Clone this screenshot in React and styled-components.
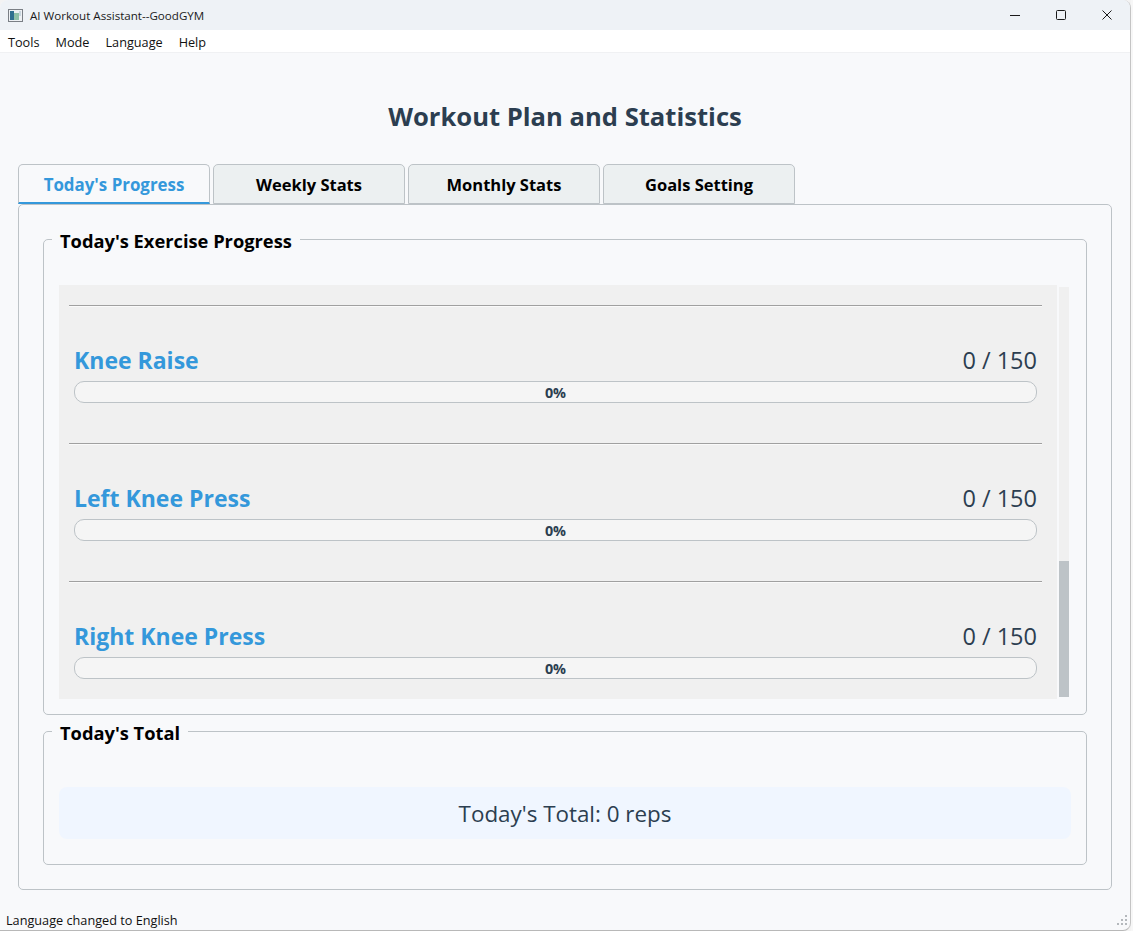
import React from "react";
import styled, { createGlobalStyle } from "styled-components";

const GlobalStyle = createGlobalStyle`
  html, body {
    margin: 0;
    padding: 0;
    width: 1133px;
    height: 931px;
    overflow: hidden;
    background: #f3f3f3;
  }
  * { box-sizing: border-box; }
`;

const Desktop = styled.div`
  width: 1133px;
  height: 931px;
  display: flex;
  font-family: "Open Sans", "Noto Sans", sans-serif;
`;

const Window = styled.div`
  width: 1131px;
  height: 931px;
  display: flex;
  flex-direction: column;
  background: #f8f9fb;
  border-right: 1px solid #c4c4c4;
  border-bottom: 1px solid #b8b8b8;
  border-radius: 8px 8px 8px 0;
  overflow: hidden;
`;

const DesktopStrip = styled.div`
  flex: 1;
  background: #f7f7f7;
`;

const TitleBar = styled.div`
  height: 30px;
  flex: none;
  display: flex;
  align-items: center;
  padding-left: 8px;
  background: #eef2f6;
`;

const TitleText = styled.span`
  margin-left: 7px;
  font-size: 11.6px;
  color: #1a1a1a;
`;

const WindowButtons = styled.div`
  margin-left: auto;
  display: flex;
  color: #1a1a1a;
`;

const WindowButton = styled.div`
  width: 46px;
  height: 30px;
  display: flex;
  align-items: center;
  justify-content: center;
`;

const MenuBar = styled.div`
  height: 23px;
  flex: none;
  display: flex;
  align-items: center;
  gap: 16px;
  padding: 2px 0 0 8px;
  background: #ffffff;
  border-bottom: 1px solid #f0f1f3;
  font-size: 12.7px;
  color: #111;
`;

const Main = styled.div`
  flex: 1;
  display: flex;
  flex-direction: column;
  padding: 0 18px 0 18px;
  min-height: 0;
`;

const Heading = styled.h1`
  margin: 0;
  height: 111px;
  padding: 47px 0 0 0;
  text-align: center;
  font-size: 25.6px;
  line-height: 34px;
  font-weight: 700;
  color: #2c3e50;
`;

const Tabs = styled.div`
  display: flex;
  gap: 3px;
  height: 41px;
  flex: none;
  position: relative;
  z-index: 1;
`;

const Tab = styled.div`
  width: 192px;
  height: 40px;
  display: flex;
  align-items: center;
  justify-content: center;
  padding-top: 1px;
  background: ${(p) => (p.$active ? "#f8f9fb" : "#ecf0f1")};
  border: 1px solid #bdc3c7;
  border-bottom: ${(p) => (p.$active ? "2px solid #3498db" : "1px solid #bdc3c7")};
  border-radius: 5px 5px 0 0;
  font-size: ${(p) => (p.$active ? "16.9px" : "16.5px")};
  font-weight: 700;
  color: ${(p) => (p.$active ? "#3498db" : "#000")};
`;

const Pane = styled.div`
  width: 1094px;
  height: 686px;
  flex: none;
  margin-top: -1px;
  padding: 20px 24px 0 24px;
  border: 1px solid #bdc3c7;
  border-radius: 5px;
`;

const Group = styled.fieldset`
  margin: 0;
  padding: 0 15px;
  min-width: 0;
  height: ${(p) => p.$height}px;
  margin-bottom: 2px;
  border: 1px solid #bdc3c7;
  border-radius: 5px;
`;

const Legend = styled.legend`
  margin-left: -7px;
  padding: 4px 8px 0 8px;
  font-size: 18.3px;
  line-height: 24px;
  font-weight: 700;
  color: #000;
`;

const ScrollRow = styled.div`
  display: flex;
  gap: 2px;
  margin-top: 32px;
  height: 414px;
`;

const ScrollArea = styled.div`
  width: 998px;
  height: 414px;
  padding: 20px 15px 0 10px;
  background: #f0f0f0;
  overflow: hidden;
`;

const Scrollbar = styled.div`
  width: 10px;
  height: 410px;
  margin-top: 2px;
  display: flex;
  flex-direction: column;
  justify-content: flex-end;
  background: #f0f0f0;
`;

const ScrollThumb = styled.div`
  height: 136px;
  background: #bdc3c7;
`;

const ExerciseItem = styled.div`
  height: 138px;
  display: flex;
  flex-direction: column;
  border-top: 1px solid #a0a0a0;
  box-shadow: inset 0 1px 0 #fafafa;
`;

const ExerciseHeader = styled.div`
  display: flex;
  justify-content: space-between;
  align-items: center;
  margin-top: 36px;
  padding: 0 5px;
  height: 36px;
`;

const ExerciseName = styled.span`
  font-size: 23px;
  font-weight: 700;
  color: #3498db;
`;

const ExerciseCount = styled.span`
  font-size: 23.5px;
  color: #2c3e50;
`;

const ProgressTrack = styled.div`
  margin: 3px 5px 0 5px;
  height: 22px;
  display: flex;
  align-items: center;
  justify-content: center;
  background: #f5f5f5;
  border: 1px solid #bdc3c7;
  border-radius: 10px;
  font-size: 14.4px;
  font-weight: 700;
  color: #2c3e50;
`;

const TotalBox = styled.div`
  margin-top: 42px;
  height: 52px;
  padding-top: 1px;
  display: flex;
  align-items: center;
  justify-content: center;
  background: #f0f6ff;
  border-radius: 8px;
  font-size: 22.4px;
  color: #2c3e50;
`;

const StatusBar = styled.div`
  flex: none;
  height: 19px;
  margin-top: auto;
  display: flex;
  align-items: center;
  justify-content: space-between;
  padding: 0 2px 2px 6px;
  font-size: 12.7px;
  color: #111;
`;

const exercises = ["Knee Raise", "Left Knee Press", "Right Knee Press"];
const tabs = ["Today's Progress", "Weekly Stats", "Monthly Stats", "Goals Setting"];

function AppIcon() {
  return (
    <svg width="15" height="13" viewBox="0 0 15 13">
      <rect x="0.5" y="0.5" width="14" height="12" fill="#eef1f4" stroke="#7a7f85" />
      <rect x="2" y="2" width="4" height="9" fill="#2f6f8f" />
      <rect x="6" y="4" width="5" height="7" fill="#8fc0a8" />
      <rect x="11" y="2" width="2" height="5" fill="#c9d6de" />
    </svg>
  );
}

function SizeGrip() {
  const dots = [[9, 1], [5, 5], [9, 5], [1, 9], [5, 9], [9, 9]];
  return (
    <svg width="12" height="12" viewBox="0 0 12 12">
      {dots.map(([x, y]) => (
        <rect key={`${x}-${y}`} x={x} y={y} width="2" height="2" fill="#b4b8bc" />
      ))}
    </svg>
  );
}

export default function App() {
  return (
    <Desktop>
      <GlobalStyle />
      <Window>
        <TitleBar>
          <AppIcon />
          <TitleText>AI Workout Assistant--GoodGYM</TitleText>
          <WindowButtons>
            <WindowButton>
              <svg width="10" height="10" viewBox="0 0 10 10">
                <path d="M0 5.5h10" stroke="currentColor" fill="none" />
              </svg>
            </WindowButton>
            <WindowButton>
              <svg width="10" height="10" viewBox="0 0 10 10">
                <rect x="0.5" y="0.5" width="9" height="9" rx="1" stroke="currentColor" fill="none" />
              </svg>
            </WindowButton>
            <WindowButton>
              <svg width="10" height="10" viewBox="0 0 10 10">
                <path d="M0.5 0.5l9 9M9.5 0.5l-9 9" stroke="currentColor" fill="none" />
              </svg>
            </WindowButton>
          </WindowButtons>
        </TitleBar>
        <MenuBar>
          <span>Tools</span>
          <span>Mode</span>
          <span>Language</span>
          <span>Help</span>
        </MenuBar>
        <Main>
          <Heading>Workout Plan and Statistics</Heading>
          <Tabs>
            {tabs.map((tab, i) => (
              <Tab key={tab} $active={i === 0}>{tab}</Tab>
            ))}
          </Tabs>
          <Pane>
            <Group $height={490}>
              <Legend>Today's Exercise Progress</Legend>
              <ScrollRow>
                <ScrollArea>
                  {exercises.map((name) => (
                    <ExerciseItem key={name}>
                      <ExerciseHeader>
                        <ExerciseName>{name}</ExerciseName>
                        <ExerciseCount>0 / 150</ExerciseCount>
                      </ExerciseHeader>
                      <ProgressTrack>0%</ProgressTrack>
                    </ExerciseItem>
                  ))}
                </ScrollArea>
                <Scrollbar>
                  <ScrollThumb />
                </Scrollbar>
              </ScrollRow>
            </Group>
            <Group $height={148}>
              <Legend>Today's Total</Legend>
              <TotalBox>Today's Total: 0 reps</TotalBox>
            </Group>
          </Pane>
        </Main>
        <StatusBar>
          <span>Language changed to English</span>
          <SizeGrip />
        </StatusBar>
      </Window>
      <DesktopStrip />
    </Desktop>
  );
}
